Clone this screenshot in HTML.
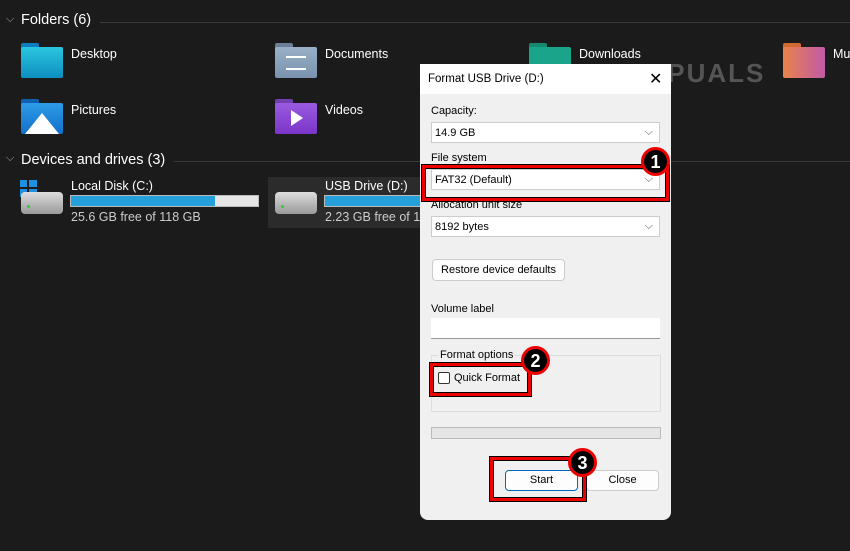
<!DOCTYPE html>
<html><head><meta charset="utf-8"><style>
*{margin:0;padding:0;box-sizing:border-box}
body{width:850px;height:551px;background:#1b1b1b;font-family:"Liberation Sans",sans-serif;color:#fff;position:relative;overflow:hidden;font-size:12px}
.a{position:absolute}
.hdr{font-size:14.5px;color:#fff}
.line{height:1px;background:#3a3a3a}
.lbl{font-size:12.5px}
.bar{height:12px;background:#e6e6e6;border:1px solid #bbb}
.bar i{display:block;height:100%;background:#26a0da}
.dlg{left:420px;top:64px;width:251px;height:456px;background:#f0f0f0;border-radius:0 0 8px 8px;color:#000;font-size:11px}
.sel{background:#fff;border:1px solid #ccc;height:21px;padding:4px 3px;font-size:11px}
.sel b{position:absolute;right:6px;top:3px;font-weight:normal;color:#555}
.btn{background:#fdfdfd;border:1px solid #ccc;border-radius:4px;text-align:center;font-size:11px;color:#000}
.rb{border:3px solid #e00;box-shadow:0 0 0 1px #000,inset 0 0 0 1px #000}
.bd{width:30px;height:30px;border-radius:50%;background:#000;border:3px solid #e00;color:#fff;font-weight:bold;font-size:18px;text-align:center;line-height:24px}
.tab{position:absolute;width:18px;height:6px;border-radius:2px 2px 0 0}
</style></head><body>
<div class="a hdr" style="left:6px;top:13px;color:#aaa;font-size:11px">⌵</div>
<div class="a hdr" style="left:21px;top:12px">Folders (6)</div>
<div class="a line" style="left:100px;top:22px;width:750px"></div>
<!-- folders -->
<div class="tab" style="left:21px;top:43px;background:#0f7cc0"></div>
<div class="a" style="left:21px;top:47px;width:42px;height:31px;background:linear-gradient(#2ac6e0,#0e8fc0);border-radius:2px"></div>
<div class="a lbl" style="left:71px;top:47px">Desktop</div>
<div class="tab" style="left:275px;top:43px;background:#6a8098"></div>
<div class="a" style="left:275px;top:47px;width:42px;height:31px;background:linear-gradient(#9ab0c8,#7a92ae);border-radius:2px"></div>
<div class="a" style="left:286px;top:56px;width:20px;height:14px;border-top:2px solid #fff;border-bottom:2px solid #fff"></div>
<div class="a lbl" style="left:325px;top:47px">Documents</div>
<div class="tab" style="left:529px;top:43px;background:#138a70"></div>
<div class="a" style="left:529px;top:47px;width:42px;height:31px;background:#1aa58a;border-radius:2px"></div>
<div class="a lbl" style="left:579px;top:47px">Downloads</div>
<div class="tab" style="left:783px;top:43px;background:#d06a30"></div>
<div class="a" style="left:783px;top:47px;width:42px;height:31px;background:linear-gradient(90deg,#e8834a,#c25aa8);border-radius:2px"></div>
<div class="a lbl" style="left:833px;top:47px">Mu</div>
<div class="a" style="left:628px;top:58px;font-size:26px;font-weight:bold;color:#555;letter-spacing:2px">A<span style="color:#3a3a3a">&nbsp;&nbsp;</span>PUALS</div>
<div class="tab" style="left:21px;top:99px;background:#1060b0"></div>
<div class="a" style="left:21px;top:103px;width:42px;height:31px;background:linear-gradient(#2e9be8,#1370c8);border-radius:2px;overflow:hidden"><div style="position:absolute;left:4px;top:10px;border-left:17px solid transparent;border-right:17px solid transparent;border-bottom:21px solid #fff"></div></div>
<div class="a lbl" style="left:71px;top:103px">Pictures</div>
<div class="tab" style="left:275px;top:99px;background:#7040b0"></div>
<div class="a" style="left:275px;top:103px;width:42px;height:31px;background:linear-gradient(#9a5be0,#7a35c8);border-radius:2px"><div style="position:absolute;left:16px;top:7px;border-top:8px solid transparent;border-bottom:8px solid transparent;border-left:12px solid #fff"></div></div>
<div class="a lbl" style="left:325px;top:103px">Videos</div>
<div class="a hdr" style="left:6px;top:152px;color:#aaa;font-size:11px">⌵</div>
<div class="a hdr" style="left:21px;top:152px">Devices and drives (3)</div>
<div class="a line" style="left:174px;top:161px;width:676px"></div>
<!-- drives -->
<div class="a" style="left:20px;top:180px;width:17px;height:17px;background:linear-gradient(90deg,transparent 7px,#1b1b1b 7px,#1b1b1b 9px,transparent 9px),linear-gradient(transparent 7px,#1b1b1b 7px,#1b1b1b 9px,transparent 9px),#1e90e0"></div>
<div class="a" style="left:21px;top:192px;width:42px;height:22px;background:linear-gradient(#ddd,#999);border-radius:4px"><i style="position:absolute;left:6px;top:13px;width:3px;height:3px;background:#3c3;border-radius:50%"></i></div>
<div class="a lbl" style="left:71px;top:179px">Local Disk (C:)</div>
<div class="a bar" style="left:70px;top:195px;width:189px"><i style="width:77%"></i></div>
<div class="a lbl" style="left:71px;top:210px;color:#ccc">25.6 GB free of 118 GB</div>
<div class="a" style="left:268px;top:177px;width:160px;height:51px;background:#2b2b2b"></div>
<div class="a" style="left:275px;top:192px;width:42px;height:22px;background:linear-gradient(#ddd,#999);border-radius:4px"><i style="position:absolute;left:6px;top:13px;width:3px;height:3px;background:#3c3;border-radius:50%"></i></div>
<div class="a lbl" style="left:325px;top:179px">USB Drive (D:)</div>
<div class="a bar" style="left:324px;top:195px;width:110px"><i style="width:100%"></i></div>
<div class="a lbl" style="left:325px;top:210px;color:#ccc">2.23 GB free of 14.</div>
<!-- dialog -->
<div class="a dlg">
 <div class="a" style="left:0;top:0;width:251px;height:30px;background:#fff"></div>
 <div class="a" style="left:8px;top:9px;font-size:11.5px">Format USB Drive (D:)</div>
 <div class="a" style="left:229px;top:5px;font-size:16px">✕</div>
 <div class="a" style="left:11px;top:41px">Capacity:</div>
 <div class="a sel" style="left:11px;top:58px;width:229px">14.9 GB<b>⌵</b></div>
 <div class="a" style="left:11px;top:88px">File system</div>
 <div class="a sel" style="left:11px;top:105px;width:229px">FAT32 (Default)<b>⌵</b></div>
 <div class="a" style="left:11px;top:135px">Allocation unit size</div>
 <div class="a sel" style="left:11px;top:152px;width:229px">8192 bytes<b>⌵</b></div>
 <div class="a btn" style="left:12px;top:195px;width:133px;height:22px;line-height:20px">Restore device defaults</div>
 <div class="a" style="left:11px;top:239px">Volume label</div>
 <div class="a" style="left:11px;top:254px;width:229px;height:21px;background:#fff;border-bottom:1px solid #999"></div>
 <div class="a" style="left:11px;top:291px;width:230px;height:57px;border:1px solid #ddd"></div>
 <div class="a" style="left:18px;top:285px;background:#f0f0f0;padding:0 2px">Format options</div>
 <div class="a" style="left:18px;top:308px;width:12px;height:12px;border:1px solid #333;border-radius:2px;background:#fff"></div>
 <div class="a" style="left:34px;top:308px">Quick Format</div>
 <div class="a" style="left:11px;top:363px;width:230px;height:12px;background:#e6e6e6;border:1px solid #bbb"></div>
 <div class="a btn" style="left:85px;top:406px;width:73px;height:21px;line-height:19px;border-color:#0067c0">Start</div>
 <div class="a btn" style="left:166px;top:406px;width:73px;height:21px;line-height:19px">Close</div>
</div>
<!-- annotations -->
<div class="a rb" style="left:422px;top:165px;width:247px;height:36px"></div>
<div class="a bd" style="left:641px;top:147px;width:29px;height:29px">1</div>
<div class="a rb" style="left:430px;top:363px;width:101px;height:33px"></div>
<div class="a bd" style="left:521px;top:346px;width:29px;height:29px">2</div>
<div class="a rb" style="left:490px;top:457px;width:96px;height:44px"></div>
<div class="a bd" style="left:568px;top:448px;width:29px;height:29px">3</div>
</body></html>
